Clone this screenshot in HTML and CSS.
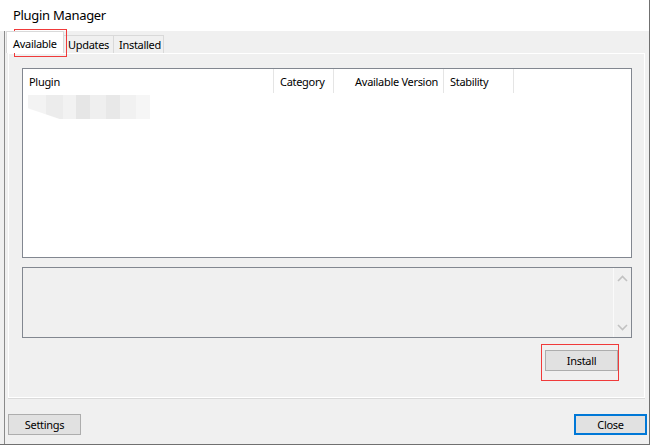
FILE: index.html
```html
<!DOCTYPE html>
<html>
<head>
<meta charset="utf-8">
<link rel="stylesheet" href="styles.css">
</head>
<body>
<div class="window">
  <div class="titlebar">Plugin Manager</div>
  <div class="client">
    <div class="tabstrip">
      <div class="tab selected">Available</div>
      <div class="tab t-upd">Updates</div>
      <div class="tab t-inst">Installed</div>
    </div>
    <div class="panelwrap">
      <div class="panel">
        <div class="listview">
          <div class="header">
            <div class="col c-plugin">Plugin</div>
            <div class="col c-cat">Category</div>
            <div class="col c-ver">Available Version</div>
            <div class="col c-stab">Stability</div>
          </div>
          <div class="row">
            <div class="smudge"></div>
          </div>
        </div>
        <div class="desc">
          <div class="desc-text"></div>
          <div class="scrollbar">
            <svg class="arrow" width="11" height="7" viewBox="0 0 11 7"><path d="M1 6 L5.5 1.5 L10 6" fill="none" stroke="#c2c2c2" stroke-width="1.6"/></svg>
            <svg class="arrow" width="11" height="7" viewBox="0 0 11 7"><path d="M1 1 L5.5 5.5 L10 1" fill="none" stroke="#c2c2c2" stroke-width="1.6"/></svg>
          </div>
        </div>
        <div class="actions">
          <button class="btn">Install</button>
        </div>
      </div>
    </div>
    <div class="footer">
      <button class="btn">Settings</button>
      <button class="btn default">Close</button>
    </div>
  </div>
  <div class="mark mark-tab"></div>
  <div class="mark mark-install"></div>
</div>
</body>
</html>
```
FILE: styles.css
```css
* { box-sizing: border-box; }
html, body { margin: 0; padding: 0; background: #ffffff; }
body {
  font-family: "Noto Sans", "Open Sans", "Liberation Sans", sans-serif;
  font-size: 11px;
  letter-spacing: -0.3px;
  color: #000;
}
.window {
  position: relative;
  width: 650px;
  height: 445px;
  display: flex;
  flex-direction: column;
  background: #f0f0f0;
  border-right: 1px solid #707070;
  border-bottom: 1px solid #707070;
}
.titlebar {
  height: 31px;
  flex: none;
  background: #ffffff;
  padding-left: 13px;
  font-size: 13px;
  letter-spacing: -0.3px;
  line-height: 31px;
}
.client {
  flex: 1;
  margin-left: 4px;
  border-left: 1px solid #8a8a8a;
  display: flex;
  flex-direction: column;
}
.tabstrip {
  height: 22px;
  display: flex;
  align-items: flex-end;
  padding-left: 1px;
  flex: none;
}
.tab {
  height: 18px;
  border: 1px solid #d9d9d9;
  border-bottom: none;
  background: #f0f0f0;
  line-height: 18px;
  margin-left: -1px;
}
.t-upd { width: 51px; padding-left: 4px; }
.t-inst { width: 51px; padding-left: 5px; }
.tab.selected {
  height: 22px;
  background: #ffffff;
  margin-left: 0;
  padding: 3px 0 0 6px;
  line-height: 18px;
  width: 58px;
  position: relative;
  z-index: 1;
}
.panelwrap {
  margin-left: 3px;
  margin-right: 4px;
  border-bottom: 1px solid #dadada;
  flex: none;
}
.panel {
  height: 345px;
  border: 1px solid #ffffff;
  padding: 14px 12px 0 13px;
  display: flex;
  flex-direction: column;
}
.listview {
  height: 190px;
  background: #ffffff;
  border: 1px solid #828790;
  flex: none;
}
.header {
  display: flex;
  height: 24px;
}
.col {
  border-right: 1px solid #e5e5e5;
  padding: 1px 6px 0;
  line-height: 24px;
  white-space: nowrap;
}
.c-plugin { width: 251px; }
.c-cat { width: 60px; }
.c-ver { width: 110px; text-align: right; padding-right: 5px; }
.c-stab { width: 70px; }
.row {
  height: 26px;
  padding-left: 5px;
  padding-top: 2px;
}
.smudge {
  width: 122px;
  height: 24px;
  background:
    linear-gradient(90deg, #f3f3f3 0 18px, #ececec 18px 35px, #f2f2f2 35px 48px, #e6e6e6 48px 62px, #efefef 62px 78px, #e8e8e8 78px 92px, #f1f1f1 92px 108px, #f6f6f6 108px 122px);
  clip-path: polygon(0 0, 100% 0, 100% 100%, 26% 100%, 0 55%);
  filter: blur(0.5px);
}
.desc {
  margin-top: 9px;
  height: 71px;
  border: 1px solid #828790;
  display: flex;
  flex: none;
}
.desc-text { flex: 1; }
.scrollbar {
  width: 18px;
  border-left: 1px solid #fafafa;
  display: flex;
  flex-direction: column;
  justify-content: space-between;
  align-items: center;
  padding: 7px 0 6px;
}
.actions {
  display: flex;
  justify-content: flex-end;
  padding-right: 14px;
  margin-top: 12px;
}
.btn {
  font-family: inherit;
  font-size: 11px;
  letter-spacing: -0.3px;
  color: #000;
  width: 73px;
  height: 21px;
  background: #e1e1e1;
  border: 1px solid #adadad;
  padding: 0;
  margin: 0;
  line-height: 18px;
}
.btn.default {
  border: 2px solid #0078d7;
  line-height: 16px;
}
.footer {
  display: flex;
  justify-content: space-between;
  padding: 15px 2px 0 3px;
}
.mark {
  position: absolute;
  border: 1px solid #f03a3a;
}
.mark-tab { left: 14px; top: 29px; width: 53px; height: 28px; }
.mark-install { left: 541px; top: 344px; width: 78px; height: 37px; }
```
